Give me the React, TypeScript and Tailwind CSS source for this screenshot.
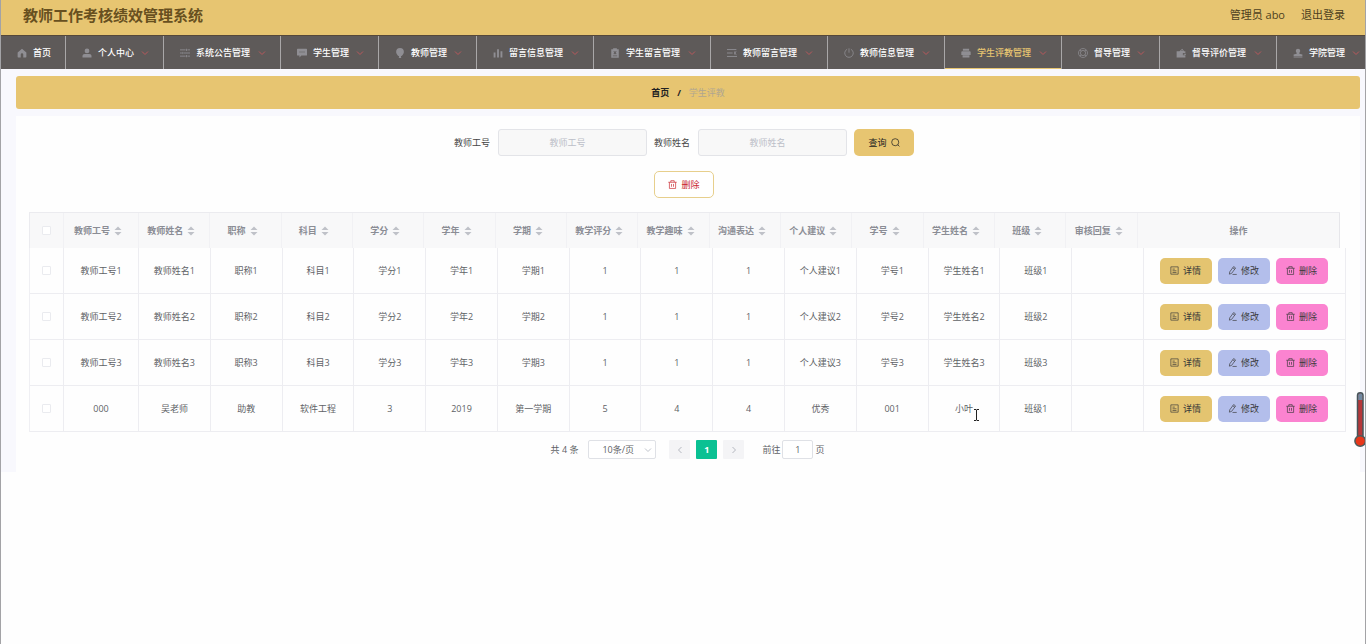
import React, { useState } from "react";

const icons: Record<string, React.ReactNode> = {
  home: (
    <path d="M8 1 1 7.2V14a1 1 0 0 0 1 1h4v-4.5a2 2 0 0 1 4 0V15h4a1 1 0 0 0 1-1V7.2z" />
  ),
  user: (
    <>
      <circle cx="8" cy="4.6" r="3.8" />
      <path d="M0.8 15v-2.2c0-2 1.4-3.3 3.4-3.3h7.6c2 0 3.4 1.3 3.4 3.3V15z" />
    </>
  ),
  operation: (
    <g fill="none" stroke="currentColor" strokeWidth="1.4">
      <path d="M0 3h9M12 3h4M0 8h3M6 8h10M0 13h9M12 13h4" />
      <path d="M10.5 1.2v3.6M4.5 6.2v3.6M10.5 11.2v3.6" />
    </g>
  ),
  chat: (
    <path
      fillRule="evenodd"
      d="M1 1h14a1 1 0 0 1 1 1v9a1 1 0 0 1-1 1H7l-3 3v-3H1a1 1 0 0 1-1-1V2a1 1 0 0 1 1-1zm3 4.600v1.600h1.600V5.600zm3.200 0v1.600h1.600V5.600zm3.200 0v1.600H12V5.600z"
    />
  ),
  balloon: (
    <path d="M8 0a6.200 6.200 0 0 0-6.200 6.200c0 3 2.400 5.800 4.800 7L6 16h4l-.6-2.800c2.400-1.200 4.800-4 4.800-7A6.200 6.200 0 0 0 8 0z" />
  ),
  data: <path d="M1 7h3v8H1zM6.500 2h3v13h-3zM12 5h3v10h-3z" />,
  release: (
    <path
      fillRule="evenodd"
      d="M2 2h3V.5h6V2h3v13.500H2zm3.500 3.700L7 7.500 5.500 9.300l1 1L8 8.700l1.500 1.600 1-1L9 7.500l1.500-1.800-1-1L8 6.300 6.500 4.700zM4.500 12v1.200h7V12z"
    />
  ),
  unfold: (
    <g fill="none" stroke="currentColor" strokeWidth="1.500">
      <path d="M0 2.500h15M0 8h9M0 13.500h16" />
      <path d="M12.500 5.500v5M15 5.500 12 8l3 2.500" />
    </g>
  ),
  power: (
    <g fill="none" stroke="currentColor" strokeWidth="1.300">
      <path d="M8 .5v7M5 2a6.800 6.800 0 1 0 6 0" />
    </g>
  ),
  printer: (
    <path d="M3 1h10v3.500H3zM2 5.200h12a1.500 1.500 0 0 1 1.500 1.500V11h-15V6.700A1.500 1.500 0 0 1 2 5.200zM2.500 11.500h11V15h-11z" />
  ),
  help: (
    <g fill="none" stroke="currentColor" strokeWidth="1.200">
      <circle cx="8" cy="8" r="7.200" />
      <circle cx="8" cy="8" r="4.200" />
      <path d="m2.900 2.900 2.200 2.200M13.100 2.900l-2.200 2.200M2.900 13.100l2.200-2.200M13.100 13.100l-2.200-2.200" />
    </g>
  ),
  wallet: (
    <path
      fillRule="evenodd"
      d="M1 5h4.500L10 1l3 4h2v3h-4v3.500h4V15H1zm7-.2h3L9.700 3.200zM12.200 9H16v1.800h-3.800z"
    />
  ),
  custom: (
    <path d="M8 1a3.500 3.500 0 0 1 3.500 3.500c0 1.600-.8 2.300-1.400 3.500v1.200l4.900 1.300V13H1v-2.500l4.900-1.300V8c-.6-1.200-1.400-1.900-1.400-3.500A3.500 3.500 0 0 1 8 1zM1 14h14v1H1z" />
  ),
  search: (
    <g fill="none" stroke="currentColor" strokeWidth="1.300">
      <circle cx="7.500" cy="7.500" r="6.300" />
      <path d="m12 12 3 3" />
    </g>
  ),
  trash: (
    <g fill="none" stroke="currentColor" strokeWidth="1.200">
      <path d="M.5 4h15M5 4V1.200h6V4M2.500 4v11h11V4M6.200 7v5M9.800 7v5" />
    </g>
  ),
  detail: (
    <g fill="none" stroke="currentColor" strokeWidth="1.200">
      <path d="M1.500 1.500h13v13h-13zM4.500 5.500h4M4.500 8.500h7M4.500 11.500h7" />
    </g>
  ),
  edit: (
    <g fill="none" stroke="currentColor" strokeWidth="1.200">
      <path d="m10 1 3.500 2.500-7 9.500L2.500 14.500 3 10.500zM8.500 3.200 12 5.700M8 15h7.500" />
    </g>
  ),
};

function Icon({ name, className }: { name: string; className: string }) {
  return (
    <svg viewBox="0 0 16 16" fill="currentColor" className={className} aria-hidden="true">
      {icons[name]}
    </svg>
  );
}

function Chevron({ className }: { className: string }) {
  return (
    <svg viewBox="0 0 8 8" fill="none" stroke="currentColor" className={className} aria-hidden="true">
      <path d="m1 2.500 3 3 3-3" />
    </svg>
  );
}

const menu = [
  { label: "首页", icon: "home", width: "w-[65px]" },
  { label: "个人中心", icon: "user", width: "w-[98px]" },
  { label: "系统公告管理", icon: "operation", width: "w-[117px]" },
  { label: "学生管理", icon: "chat", width: "w-[98px]" },
  { label: "教师管理", icon: "balloon", width: "w-[98px]" },
  { label: "留言信息管理", icon: "data", width: "w-[117px]" },
  { label: "学生留言管理", icon: "release", width: "w-[117px]" },
  { label: "教师留言管理", icon: "unfold", width: "w-[117px]" },
  { label: "教师信息管理", icon: "power", width: "w-[117px]" },
  { label: "学生评教管理", icon: "printer", width: "w-[117px]" },
  { label: "督导管理", icon: "help", width: "w-[98px]" },
  { label: "督导评价管理", icon: "wallet", width: "w-[117px]" },
  { label: "学院管理", icon: "custom", width: "w-[98px]" },
];

const columns = [
  "教师工号", "教师姓名", "职称", "科目", "学分", "学年", "学期", "教学评分",
  "教学趣味", "沟通表达", "个人建议", "学号", "学生姓名", "班级", "审核回复",
];

const rows = [
  ["教师工号1", "教师姓名1", "职称1", "科目1", "学分1", "学年1", "学期1", "1", "1", "1", "个人建议1", "学号1", "学生姓名1", "班级1", ""],
  ["教师工号2", "教师姓名2", "职称2", "科目2", "学分2", "学年2", "学期2", "1", "1", "1", "个人建议2", "学号2", "学生姓名2", "班级2", ""],
  ["教师工号3", "教师姓名3", "职称3", "科目3", "学分3", "学年3", "学期3", "1", "1", "1", "个人建议3", "学号3", "学生姓名3", "班级3", ""],
  ["000", "吴老师", "助教", "软件工程", "3", "2019", "第一学期", "5", "4", "4", "优秀", "001", "小叶", "班级1", ""],
];

function Cols() {
  return (
    <colgroup>
      <col className="w-[34px]" />
      <col className="w-[75px]" />
      {columns.slice(1).map((c) => (
        <col key={c} />
      ))}
      <col className="w-[202px]" />
    </colgroup>
  );
}

function Check({ label }: { label: string }) {
  return (
    <input
      type="checkbox"
      aria-label={label}
      className="block mx-auto size-[9px] appearance-none rounded-[1px] border border-[#eaebef] bg-white checked:bg-[#0ac193]"
    />
  );
}

function SearchField({ id, label }: { id: string; label: string }) {
  const [value, setValue] = useState("");

  return (
    <div className="flex items-center mr-[7px]">
      <label htmlFor={id} className="mr-2 text-[#444]">
        {label}
      </label>
      <input
        id={id}
        type="text"
        placeholder={label}
        value={value}
        onChange={(e) => setValue(e.target.value)}
        className="w-[149px] h-[27px] rounded-[3px] border border-[#e3e4e8] bg-[#f8f8f8] pl-2 pr-[18px] text-center placeholder:text-[#bcbfc8]"
      />
    </div>
  );
}

function App() {
  const [page, setPage] = useState("1");

  return (
    <div className="relative min-h-screen overflow-hidden border-x border-[#a3a3a6] bg-[#fefefe] font-['Open_Sans','Noto_Sans_CJK_SC',sans-serif] text-[9px] leading-3 text-[#606266]">
      <header className="flex h-[35px] items-center justify-between bg-[#e7c571] pb-[5px] pl-[22px] pr-5">
        <h1 className="text-[15px] leading-5 font-bold text-[#68501f]">教师工作考核绩效管理系统</h1>
        <div className="flex gap-4 text-[11px] leading-4 text-[#4d3f1e]">
          <span>管理员 abo</span>
          <a href="#logout">退出登录</a>
        </div>
      </header>

      <nav className="overflow-hidden border-t border-[#55483a] bg-[#5e5a59]">
        <ul className="flex h-[33px]">
          {menu.map((item, i) => {
            const active = item.label === "学生评教管理";
            return (
              <li key={item.label} className={`${item.width} shrink-0 border-r border-[#a9a7a8]`}>
                <a
                  href="#menu"
                  className={`flex h-full items-center border-b pl-4 pr-[14px] pt-0.5 font-medium ${
                    active ? "border-[#e7c571] text-[#e7c571]" : "border-transparent text-white"
                  }`}
                >
                  <Icon name={item.icon} className="mr-1.5 size-2.5 shrink-0 text-[#8f8e93]" />
                  <span className="whitespace-nowrap">{item.label}</span>
                  {i > 0 && <Chevron className="ml-auto size-2 shrink-0 text-[#b9585c]" />}
                </a>
              </li>
            );
          })}
        </ul>
      </nav>

      <main className="bg-[#f8f8fd] pl-[15px] pr-[5px] pt-[7px]">
        <div className="flex h-[33px] items-center justify-center gap-2 rounded-[3px] bg-[#e7c571]">
          <a href="#home" className="font-bold text-[#222]">首页</a>
          <span className="font-bold text-[#222]">/</span>
          <span className="text-[#b0a690]">学生评教</span>
        </div>

        <section className="mt-[7px] bg-[#fefefe] pt-[13px] pb-[13px] pl-[13px] pr-[14px]">
          <form className="flex justify-center" onSubmit={(e) => e.preventDefault()}>
            <SearchField id="teacher-no" label="教师工号" />
            <SearchField id="teacher-name" label="教师姓名" />
            <button
              type="submit"
              className="mr-[7px] flex h-[27px] w-[60px] items-center justify-center gap-1 rounded-[5px] bg-[#e7c571] text-[#222]"
            >
              查询
              <Icon name="search" className="size-[9px]" />
            </button>
          </form>

          <div className="mt-[15px] flex justify-center">
            <button
              type="button"
              className="mr-[7px] flex h-[27px] w-[60px] items-center justify-center gap-1 rounded-[5px] border border-[#e7cf8c] bg-white text-[#c9252d]"
            >
              <Icon name="trash" className="size-[9px]" />
              删除
            </button>
          </div>

          <div className="mt-[14px]">
            <div className="mr-1.5">
              <table className="w-full table-fixed border-separate border-spacing-0 border-l border-t border-[#ebebef] bg-[#f8f8f9]">
                <Cols />
                <thead>
                  <tr className="h-[35px] text-[#8b8d95]">
                    <th className="border-r border-[#f1f1f4] p-0">
                      <Check label="全选" />
                    </th>
                    {columns.map((c) => (
                      <th key={c} className="border-r border-[#f1f1f4] p-0 font-bold">
                        <div className="flex items-center justify-center pr-0.5">
                          {c}
                          <svg viewBox="0 0 16 12" fill="#bfc1c8" className="h-3 w-4" aria-hidden="true">
                            <path d="M8 1.500 11.500 5h-7zM8 10.500 4.500 7h7z" />
                          </svg>
                        </div>
                      </th>
                    ))}
                    <th className="border-r border-[#e6e6ea] p-0 font-bold">操作</th>
                  </tr>
                </thead>
              </table>
            </div>
            <table className="w-full table-fixed border-separate border-spacing-0 border-l border-[#efeff3]">
              <Cols />
              <tbody>
                {rows.map((row, r) => (
                  <tr key={r} className="h-[46px]">
                    <td className="border-r border-b border-[#ededf1] p-0">
                      <Check label={`选择第${r + 1}行`} />
                    </td>
                    {row.map((cell, c) => (
                      <td key={c} className="border-r border-b border-[#ededf1] p-0 text-center">
                        {cell}
                      </td>
                    ))}
                    <td className="border-r border-b border-[#ededf1] p-0">
                      <div className="flex justify-center gap-1.5 pr-0.5 text-[#3a3a3a]">
                        <button type="button" className="flex h-[26px] w-[52px] items-center justify-center gap-1 rounded-[5px] bg-[#e4c470]">
                          <Icon name="detail" className="size-[9px]" />
                          详情
                        </button>
                        <button type="button" className="flex h-[26px] w-[52px] items-center justify-center gap-1 rounded-[5px] bg-[#b3beeb]">
                          <Icon name="edit" className="size-[9px]" />
                          修改
                        </button>
                        <button type="button" className="flex h-[26px] w-[52px] items-center justify-center gap-1 rounded-[5px] bg-[#fb83d0]">
                          <Icon name="trash" className="size-[9px]" />
                          删除
                        </button>
                      </div>
                    </td>
                  </tr>
                ))}
              </tbody>
            </table>
          </div>

          <div className="mt-2 flex h-[19px] items-center justify-center">
            <span className="mr-2.5">共 4 条</span>
            <div className="relative mr-[13px]">
              <select
                aria-label="每页条数"
                className="block h-[19px] w-[68px] appearance-none rounded-[2px] border border-[#dfe1e6] bg-white pl-[13px]"
              >
                <option>10条/页</option>
                <option>20条/页</option>
                <option>50条/页</option>
              </select>
              <Chevron className="pointer-events-none absolute right-1 top-1.5 size-2 text-[#c0c4cc]" />
            </div>
            <div className="mr-[18px] flex gap-1.5">
              <button type="button" aria-label="上一页" className="flex h-[19px] w-[21px] items-center justify-center rounded-[1px] bg-[#f4f4f6]">
                <Chevron className="size-2 rotate-90 text-[#b4b7bf]" />
              </button>
              <button type="button" className="h-[19px] w-[21px] rounded-[1px] bg-[#0ac193] font-bold text-white">
                1
              </button>
              <button type="button" aria-label="下一页" className="flex h-[19px] w-[21px] items-center justify-center rounded-[1px] bg-[#f4f4f6]">
                <Chevron className="size-2 -rotate-90 text-[#b4b7bf]" />
              </button>
            </div>
            <label htmlFor="page">前往</label>
            <input
              id="page"
              type="text"
              value={page}
              onChange={(e) => setPage(e.target.value)}
              className="mx-0.5 h-[19px] w-[31px] rounded-[2px] border border-[#dfe1e6] bg-white text-center"
            />
            <span>页</span>
          </div>
        </section>
      </main>

      {/* text cursor */}
      <svg viewBox="0 0 7 12" fill="none" stroke="#222" className="absolute left-[972px] top-[409px] h-3 w-[7px]" aria-hidden="true">
        <path d="M1 .5h2l.5.500.500-.500h2M3.500 1v10M1 11.500h2l.500-.500.500.500h2" />
      </svg>

      {/* thermometer */}
      <svg viewBox="0 0 12 56" className="absolute -right-px top-[392px] h-14 w-3" aria-hidden="true">
        <rect x="3.500" y=".8" width="5.500" height="48" rx="2.700" fill="#b5383a" stroke="#45555a" strokeWidth="1.500" />
        <path d="M4.200 8V3.500a2 2 0 0 1 4.200 0V8z" fill="#7189a0" />
        <circle cx="6.200" cy="49" r="5.300" fill="#e8371a" stroke="#4b5b5c" strokeWidth="1.500" />
      </svg>
    </div>
  );
}
export default App;
